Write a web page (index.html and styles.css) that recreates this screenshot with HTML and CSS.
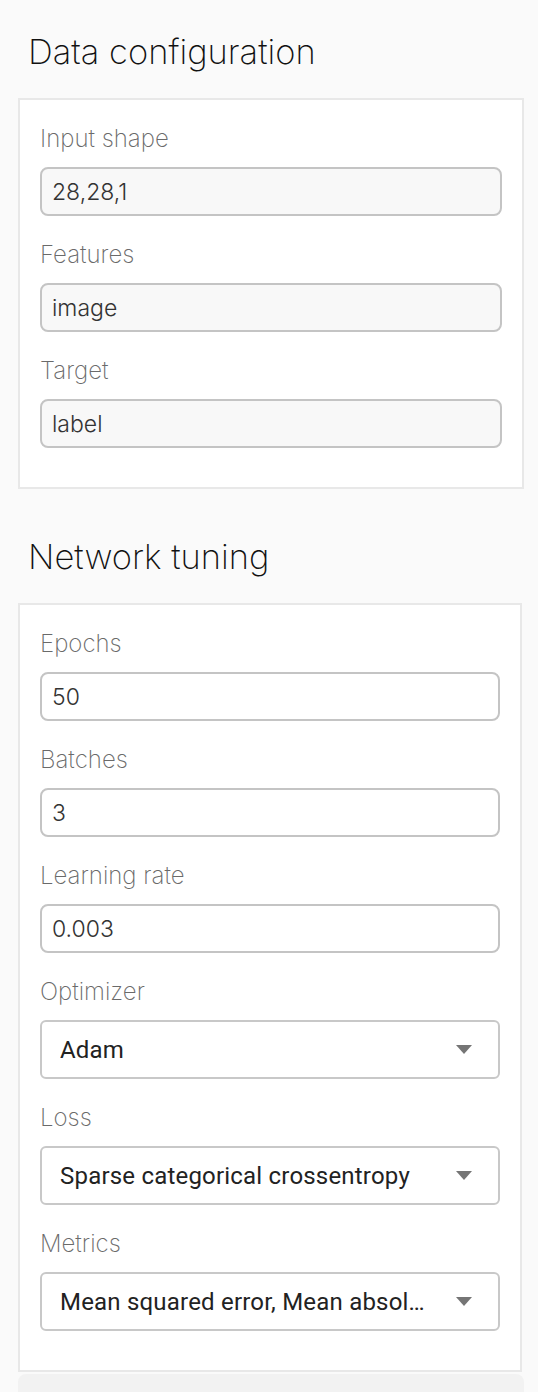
FILE: index.html
```html
<!DOCTYPE html>
<html lang="en">
<head>
    <meta charset="UTF-8">
    <meta name="viewport" content="width=device-width, initial-scale=1.0">
    <title>Model settings</title>
    <link rel="stylesheet" href="styles.css">
</head>
<body>
<div class="settings">
    <h2 class="section-title">Data configuration</h2>
    <div class="panel panel-data">
        <div class="field">
            <label for="input_shape">Input shape</label>
            <input type="text" id="input_shape" class="text-input locked" value="28,28,1" readonly>
        </div>
        <div class="field">
            <label for="features">Features</label>
            <input type="text" id="features" class="text-input locked" value="image" readonly>
        </div>
        <div class="field">
            <label for="target">Target</label>
            <input type="text" id="target" class="text-input locked" value="label" readonly>
        </div>
    </div>

    <h2 class="section-title">Network tuning</h2>
    <div class="panel panel-tuning">
        <div class="field">
            <label for="epochs">Epochs</label>
            <input type="text" id="epochs" class="text-input" value="50">
        </div>
        <div class="field">
            <label for="batches">Batches</label>
            <input type="text" id="batches" class="text-input" value="3">
        </div>
        <div class="field">
            <label for="learning_rate">Learning rate</label>
            <input type="text" id="learning_rate" class="text-input" value="0.003">
        </div>
        <div class="field">
            <label>Optimizer</label>
            <div class="dropdown">
                <span class="dropdown-value">Adam</span>
                <svg class="dropdown-arrow" width="16" height="9" viewBox="0 0 16 9"><path d="M0 0h16L8 9z"/></svg>
            </div>
        </div>
        <div class="field">
            <label>Loss</label>
            <div class="dropdown">
                <span class="dropdown-value">Sparse categorical crossentropy</span>
                <svg class="dropdown-arrow" width="16" height="9" viewBox="0 0 16 9"><path d="M0 0h16L8 9z"/></svg>
            </div>
        </div>
        <div class="field">
            <label>Metrics</label>
            <div class="dropdown">
                <span class="dropdown-value">Mean squared error, Mean absolute error</span>
                <svg class="dropdown-arrow" width="16" height="9" viewBox="0 0 16 9"><path d="M0 0h16L8 9z"/></svg>
            </div>
        </div>
    </div>
    <div class="panel-next"></div>
</div>
</body>
</html>
```

FILE: styles.css
```css
body {
    margin: 0;
    background-color: #fafafa;
    font-family: Inter, "Noto Sans", sans-serif;
    color: #222;
}

.settings {
    padding: 32px 0 0 18px;
    height: 1360px;
    overflow: hidden;
}

.section-title {
    margin: 0 0 26px 10px;
    font-size: 34.5px;
    line-height: 40px;
    font-weight: 250;
    color: #111;
}

.panel {
    background: #fff;
    border: 2px solid #e8e8e8;
    padding: 25px 20px 39px;
    display: flex;
    flex-direction: column;
    gap: 25px;
}

.panel-data {
    box-sizing: border-box;
    width: 506px;
    margin-bottom: 48px;
}

.panel-tuning {
    box-sizing: border-box;
    width: 504px;
}

.field label {
    display: block;
    font-size: 24px;
    line-height: 28px;
    font-weight: 200;
    color: #6a6a6a;
    margin-bottom: 14px;
}

.text-input {
    display: block;
    width: 100%;
    height: 49px;
    box-sizing: border-box;
    padding: 0 10px;
    border: 2px solid #c4c4c4;
    border-radius: 8px;
    background: #fff;
    font-family: Inter, "Noto Sans", sans-serif;
    font-size: 23px;
    font-weight: 300;
    color: #333;
    outline: none;
}

.text-input.locked {
    background: #f8f8f8;
}

.dropdown {
    display: flex;
    align-items: center;
    height: 59px;
    box-sizing: border-box;
    padding: 0 26px 0 18px;
    border: 2px solid #c8c8c8;
    border-radius: 6px;
    background: #fff;
}

.dropdown-value {
    flex: 1;
    min-width: 0;
    margin-right: 22px;
    font-family: Roboto, "Liberation Sans", sans-serif;
    font-size: 24px;
    letter-spacing: 0.2px;
    color: #222;
    white-space: nowrap;
    overflow: hidden;
    text-overflow: ellipsis;
}

.dropdown-arrow {
    flex: none;
    fill: #757575;
}

.panel-next {
    width: 506px;
    height: 40px;
    margin-top: 2px;
    background: #f2f2f2;
    border-radius: 8px 8px 0 0;
}
```
